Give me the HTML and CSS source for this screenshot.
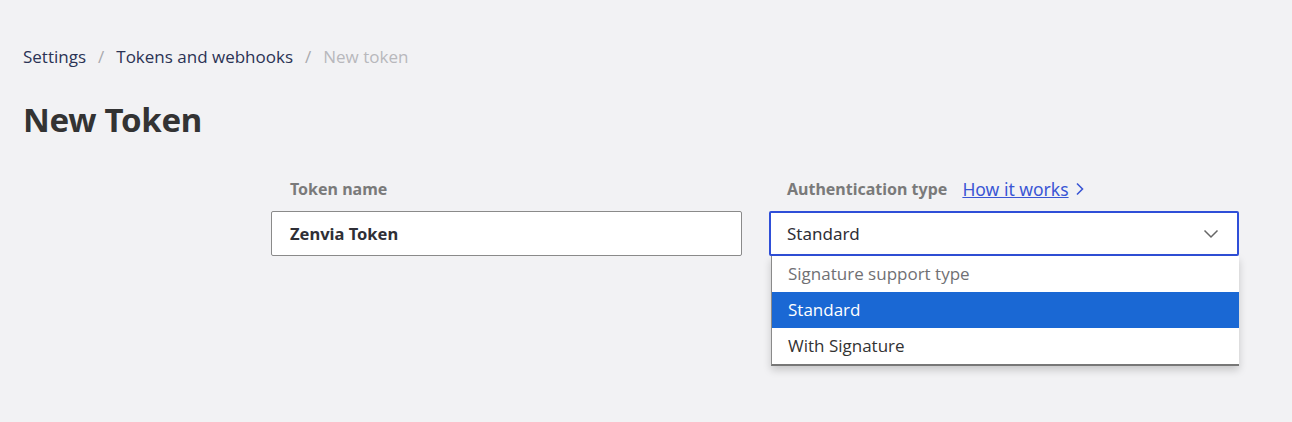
FILE: index.html
```html
<!DOCTYPE html>
<html lang="en">
<head>
<meta charset="utf-8">
<title>New Token</title>
<link rel="stylesheet" href="styles.css">
</head>
<body>
<div class="page">
  <nav class="breadcrumb">
    <a class="crumb">Settings</a>
    <span class="sep">/</span>
    <a class="crumb">Tokens and webhooks</a>
    <span class="sep">/</span>
    <span class="crumb current">New token</span>
  </nav>
  <h1 class="title">New Token</h1>
  <form class="form">
    <div class="field">
      <div class="label-row"><label class="label">Token name</label></div>
      <div class="input">Zenvia Token</div>
    </div>
    <div class="field">
      <div class="label-row">
        <label class="label">Authentication type</label>
        <a class="help">How it works</a>
        <svg class="help-chev" width="10" height="14" viewBox="0 0 10 14"><path d="M2 1.5 L7.5 7 L2 12.5" fill="none" stroke="#3a56d4" stroke-width="1.6"/></svg>
      </div>
      <div class="select-wrap">
        <div class="select">
          <span>Standard</span>
          <svg class="chev" width="16" height="10" viewBox="0 0 16 10"><path d="M1.5 1.5 L8 8 L14.5 1.5" fill="none" stroke="#666" stroke-width="1.5"/></svg>
        </div>
        <ul class="menu">
          <li class="opt head">Signature support type</li>
          <li class="opt selected">Standard</li>
          <li class="opt">With Signature</li>
        </ul>
      </div>
    </div>
  </form>
</div>
</body>
</html>
```
FILE: styles.css
```css
* { box-sizing: border-box; }
html, body { margin: 0; padding: 0; }
body {
  background: #f2f2f4;
  font-family: "Open Sans", "Noto Sans", sans-serif;
  color: #333;
  width: 1292px;
  height: 422px;
  overflow: hidden;
}
.page { padding: 45px 23px 0 23px; }
.breadcrumb {
  display: flex;
  align-items: center;
  gap: 12px;
  font-size: 17px;
  line-height: 24px;
  font-family: "Open Sans", sans-serif;
}
.crumb { color: #2b3354; }
.crumb.current { color: #b8b8bc; }
.sep { color: #a9a9ad; }
.title {
  margin: 31px 0 0 0;
  font-size: 33px;
  line-height: 40px;
  font-weight: 700;
  color: #333;
  font-family: "Noto Sans", sans-serif;
  letter-spacing: -0.3px;
}
.form {
  display: grid;
  grid-template-columns: 471px 470px;
  column-gap: 27px;
  margin: 38px 0 0 248px;
}
.label-row {
  display: flex;
  align-items: center;
  height: 22px;
  padding-left: 19px;
  margin-bottom: 11px;
}
.field:nth-child(2) .label-row { padding-left: 18px; }
.label {
  font-size: 16px;
  font-weight: 700;
  color: #7a7a7a;
  font-family: "Noto Sans", sans-serif;
}
.help {
  margin-left: 15px;
  color: #3a56d4;
  text-decoration: underline;
  font-size: 17.5px;
  font-family: "Noto Sans", sans-serif;
}
.help-chev { margin-left: 6px; }
.input {
  height: 45px;
  border: 1px solid #8a8a8a;
  border-radius: 2px;
  background: #fff;
  padding: 0 18px;
  display: flex;
  align-items: center;
  font-size: 16.5px;
  font-weight: 700;
  color: #2f2f36;
  font-family: "Noto Sans", sans-serif;
}
.select-wrap { position: relative; }
.select {
  height: 45px;
  border: 2px solid #2f4fd8;
  border-radius: 2px;
  background: #fff;
  display: flex;
  align-items: center;
  justify-content: space-between;
  padding: 0 18px 0 16px;
  font-size: 17px;
  color: #2f2f36;
  font-family: "Noto Sans", sans-serif;
}
.menu {
  position: absolute;
  left: 2px;
  right: 0;
  top: 45px;
  margin: 0;
  padding: 0;
  list-style: none;
  background: #fff;
  border-left: 1px solid #8a8a8a;
  border-bottom: 2px solid #777;
  box-shadow: 0 4px 8px rgba(0,0,0,0.18);
  font-family: "Open Sans", sans-serif;
  font-size: 17px;
}
.opt {
  height: 36px;
  display: flex;
  align-items: center;
  padding: 0 16px 1px;
  color: #333;
}
.opt.head { color: #707074; }
.opt.selected { background: #1a68d4; color: #fff; }
```
